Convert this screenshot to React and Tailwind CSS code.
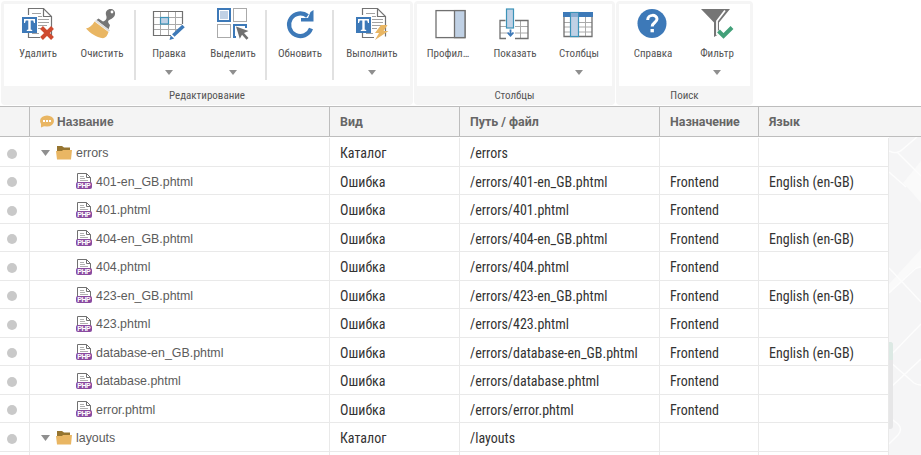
const cond = "font-['Roboto_Condensed','Roboto',sans-serif] [font-stretch:75%]";

function TextPage() {
  return (
    <>
      <path d="M7.500 8V1.500h15l8 8V29.500M7.500 25V30.500H19" fill="none" stroke="#737373" strokeWidth="1.2" />
      <path d="M22.500 1.500V9.500H30.500" fill="none" stroke="#737373" strokeWidth="1.2" />
      <path d="M11 6.500h9M17 9.500h4M17 12.500h11M17 15.500h11M17 18.500h9M17 21.500h5M11 26.500h7" stroke="#a3a3a3" strokeWidth="1" />
      <rect x="1" y="10" width="15" height="16" fill="#3d79b8" />
      <path d="M3 12h11v4h-1l-.8-2.500H9.700V22.500l1.500.4V24H5.800V22.900L7.300 22.500v-9H4.800L4 16H3z" fill="#fff" />
    </>
  );
}

const icons = {
  remove: (
    <>
      <TextPage />
      <path d="M20.500 20.500l11 11M31.500 20.500L20.500 31.500" stroke="#cf4a2f" strokeWidth="4" />
    </>
  ),
  clean: (
    <>
      <path d="M18 14.500c4-1.500 4-4 3-6.500-1-4 2-6.500 5.500-6 3 .5 4.500 4 3 7-1.500 2.500-4 3-6 4.500-1 1 0 3 1.500 4.500l-1.500 4.500-12-9.500 2-1.500z" fill="#757575" />
      <circle cx="27" cy="5" r="1.400" fill="#fff" />
      <path d="M10.500 13.500L24.500 24" stroke="#ddd" strokeWidth="2" />
      <path d="M9.500 14.500L23.500 25c-1 3.500-2.500 5.500-5.500 6.300C11 30 5.500 26.500 1 21.500c3-.5 6.500-3 8.500-7z" fill="#e9b663" />
    </>
  ),
  edit: (
    <>
      <path d="M8.500 5v23M16.500 5v23M23.500 5v21M1 10.500h29M1 17.500h29M1 22.500h27" stroke="#aaa" />
      <path d="M19 28.500H1.500V4.500H30.500V17" fill="none" stroke="#707070" strokeWidth="1.200" />
      <rect x="8.500" y="10.500" width="8" height="6.500" fill="#c0d1e5" stroke="#3c93b8" strokeWidth="1.200" />
      <path d="M21.300 28.500L31.500 19" stroke="#3d79b8" strokeWidth="3.600" />
      <path d="M17.500 33l1.200-4.500 3.500 3z" fill="#3d79b8" />
    </>
  ),
  select: (
    <>
      <rect x="2" y="2" width="12" height="12" fill="#fff" stroke="#3d79b8" strokeWidth="2" />
      <rect x="4" y="4" width="8" height="8" fill="#c0d1e5" />
      <rect x="17.500" y="1.500" width="13" height="13" fill="none" stroke="#aaa" />
      <rect x="1.500" y="17.500" width="13" height="13" fill="none" stroke="#aaa" />
      <path d="M20 30h-2V18h12v3" fill="none" stroke="#3d79b8" strokeWidth="2" />
      <path d="M20 19.500L32.500 24l-4.500 2 4.500 5-2 1.800-4.500-5-2.200 4z" fill="#707070" />
    </>
  ),
  refresh: (
    <>
      <path d="M28 21.500A11.300 11.300 0 1 1 24.500 9" fill="none" stroke="#3d79b8" strokeWidth="4.200" />
      <path d="M30.500 3v11.500H18V11H25L27.500 5z" fill="#3d79b8" />
    </>
  ),
  run: (
    <>
      <TextPage />
      <path d="M26 18h6.500l-4 6h5L20 33l4-7h-4z" fill="#e9b663" />
    </>
  ),
  profile: (
    <>
      <rect x="2" y="3.600" width="29" height="27" fill="#fff" stroke="#707070" strokeWidth="1.300" />
      <rect x="20.500" y="3.600" width="10.500" height="27" fill="#c0d1e5" stroke="#707070" strokeWidth="1.300" />
    </>
  ),
  show: (
    <>
      <path d="M2 19.500h7M2 26h7M17 19.500h13M17 26h13M22.500 13v18" stroke="#aaa" />
      <path d="M7.500 13.500H2V31.500H8M17 31.500H30V13.500H17" fill="none" stroke="#707070" strokeWidth="1.300" />
      <rect x="8.500" y="2" width="7" height="19" fill="#c0d1e5" stroke="#3c93b8" strokeWidth="1.200" />
      <path d="M12.500 22.500v6M9.500 25.500l3 3.200 3-3.200" fill="none" stroke="#3d79b8" strokeWidth="1.800" />
    </>
  ),
  columns: (
    <>
      <path d="M2 15.500h28M2 20h28M2 25h28M23.500 10v19" stroke="#aaa" />
      <path d="M2 10V29.500H30V10" fill="none" stroke="#707070" strokeWidth="1.300" />
      <rect x="1" y="5" width="30" height="5" fill="#3d79b8" />
      <rect x="8.500" y="5.500" width="8" height="24" fill="#c0d1e5" stroke="#3c93b8" strokeWidth="1.200" />
      <rect x="9" y="6" width="7" height="4" fill="#86abd2" />
    </>
  ),
  help: (
    <>
      <circle cx="16" cy="16.500" r="14.500" fill="#3d79b8" />
      <path d="M11.700 13c0-6 9.300-6 9.300-1 0 3.500-4.800 3.500-4.800 7.500" fill="none" stroke="#fff" strokeWidth="3" />
      <rect x="14.500" y="22" width="3.400" height="3.300" fill="#fff" />
    </>
  ),
  filter: (
    <>
      <path d="M1 2h29L19 15.500V27l-5 3V15.500z" fill="#757575" />
      <path d="M25 3.500L17 14V28" fill="none" stroke="#fff" strokeWidth="1.800" />
      <path d="M18.500 23.500l5.500 5 8-8" fill="none" stroke="#fff" strokeWidth="7" />
      <path d="M18.500 24l5 5 8.500-8.500" fill="none" stroke="#42a079" strokeWidth="4" />
    </>
  ),
};

function Tool({ icon, label, menu, wide, labelClass = "" }) {
  return (
    <div className={`flex h-full shrink-0 flex-col items-center ${wide ? "w-[74px]" : "w-16"}`}>
      <svg className="mt-[3px] h-[34px] w-[34px] shrink-0" viewBox="0 0 34 34">{icons[icon]}</svg>
      <span className={`mt-[5px] text-[11px] leading-4 whitespace-nowrap text-[#555] ${cond} ${labelClass}`}>{label}</span>
      {menu && <svg className="mt-2 h-[5px] w-2" viewBox="0 0 8 5"><path d="M0 0h8L4 5z" fill="#8f8f8f" /></svg>}
    </div>
  );
}

function Separator() {
  return <div className="mt-1.5 mr-px h-[70px] w-0.5 shrink-0 bg-[#e1e1e1]" />;
}

function Group({ title, className, children }) {
  return (
    <section className={`flex h-[104px] shrink-0 flex-col rounded bg-[#f5f5f5] px-[3px] pt-[3px] ${className}`}>
      <div className="flex h-[82px] bg-white pl-0.5">{children}</div>
      <h2 className={`flex h-[19px] items-center justify-center pt-0.5 text-[11px] text-[#555] ${cond}`}>{title}</h2>
    </section>
  );
}

const rows = [
  ["errors", "Каталог", "/errors", "", ""],
  ["401-en_GB.phtml", "Ошибка", "/errors/401-en_GB.phtml", "Frontend", "English (en-GB)"],
  ["401.phtml", "Ошибка", "/errors/401.phtml", "Frontend", ""],
  ["404-en_GB.phtml", "Ошибка", "/errors/404-en_GB.phtml", "Frontend", "English (en-GB)"],
  ["404.phtml", "Ошибка", "/errors/404.phtml", "Frontend", ""],
  ["423-en_GB.phtml", "Ошибка", "/errors/423-en_GB.phtml", "Frontend", "English (en-GB)"],
  ["423.phtml", "Ошибка", "/errors/423.phtml", "Frontend", ""],
  ["database-en_GB.phtml", "Ошибка", "/errors/database-en_GB.phtml", "Frontend", "English (en-GB)"],
  ["database.phtml", "Ошибка", "/errors/database.phtml", "Frontend", ""],
  ["error.phtml", "Ошибка", "/errors/error.phtml", "Frontend", ""],
  ["layouts", "Каталог", "/layouts", "", ""],
];

function FolderIcon() {
  return (
    <svg className="ml-[6px] h-4 w-4 shrink-0" viewBox="0 0 16 16">
      <path d="M1 1h5l2 1.500h6V6H1z" fill="#967530" />
      <path d="M0 6h6l1-1h9l-1 9.500H1z" fill="#e9b663" />
    </svg>
  );
}

function PhpIcon() {
  return (
    <svg className="h-4 w-4 shrink-0" viewBox="0 0 16 16">
      <path d="M1.500 10V.500h9l4 4V10" fill="#fff" stroke="#707070" />
      <path d="M10.500.500v4h4" fill="none" stroke="#707070" />
      <path d="M4 3.500h4M4 5.500h5M4 7.500h8" stroke="#b0b0b0" />
      <rect y="9" width="16" height="7" rx="2" fill="#8a4ba0" />
      <text x="8" y="15.100" textAnchor="middle" textLength="13.500" fontSize="7" fontWeight="bold" fill="#fff" fontFamily="Liberation Sans, sans-serif">PHP</text>
    </svg>
  );
}

function Row({ data, index }) {
  const [name, kind, path, target, lang] = data;
  const folder = kind === "Каталог";
  const short = index % 2 === 1;
  const height = index === 0 ? "h-[30px] pt-px" : short ? "h-7" : "h-[29px]";
  const cell = `flex items-center border-r border-[#e9e9e9] pl-[10px] whitespace-nowrap text-[14px] text-[#333] ${short ? "pt-[3px]" : "pt-0.5"} ${cond}`;
  return (
    <div className={`grid shrink-0 grid-cols-[30px_300px_130px_200px_99px_130px] border-b border-[#e9e9e9] bg-white ${height}`}>
      <div className="flex items-center border-r border-[#e9e9e9] pt-[3px] pl-[7px]">
        <span className="size-[10px] rounded-full bg-[#c9c9c9]" />
      </div>
      <div className={`flex items-center border-r border-[#e9e9e9] font-['Liberation_Sans',sans-serif] text-[12.4px] text-[#5c5c5c] ${short ? "pt-px" : "pt-0.5"} ${folder ? "pl-[11px]" : "pl-[46px]"}`}>
        {folder && <svg className="h-1.5 w-[9px]" viewBox="0 0 9 6"><path d="M0 0h9L4.500 6z" fill="#8f8f8f" /></svg>}
        {folder ? <FolderIcon /> : <PhpIcon />}
        <span className={`ml-1 ${short ? "pt-0.5" : "pt-px"}`}>{name}</span>
      </div>
      <div className={cell}>{kind}</div>
      <div className={cell}>{path}</div>
      <div className={cell}>{target}</div>
      <div className={cell}>{lang}</div>
    </div>
  );
}

export default function App() {
  const head = "flex items-center border-r border-[#bdbdbd] pl-[10px]";
  return (
    <div className="flex h-[455px] w-[921px] flex-col overflow-hidden bg-white">
      <div className="flex h-[106px] shrink-0 pt-px pl-px">
        <Group title="Редактирование" className="w-[412px]">
          <Tool icon="remove" label="Удалить" />
          <Tool icon="clean" label="Очистить" />
          <Separator />
          <Tool icon="edit" label="Правка" menu />
          <Tool icon="select" label="Выделить" menu />
          <Separator />
          <Tool icon="refresh" label="Обновить" />
          <Separator />
          <Tool icon="run" label="Выполнить" menu wide />
        </Group>
        <Group title="Столбцы" className="ml-px w-[201px]">
          <Tool icon="profile" label="Профил…" labelClass="mr-1.5" />
          <Tool icon="show" label="Показать" />
          <Tool icon="columns" label="Столбцы" menu />
        </Group>
        <Group title="Поиск" className="ml-px w-[137px]">
          <Tool icon="help" label="Справка" />
          <Tool icon="filter" label="Фильтр" menu />
        </Group>
      </div>
      <div className="grid h-[31px] shrink-0 grid-cols-[30px_300px_130px_200px_99px_162px] border-y border-[#bdbdbd] bg-[#f4f4f4] font-['Roboto',sans-serif] text-[12.4px] font-bold text-[#666]">
        <div className="border-r border-[#bdbdbd]" />
        <div className={head}>
          <svg className="mr-[3px] h-[13px] w-[14px]" viewBox="0 0 14 13">
            <ellipse cx="7" cy="6" rx="7" ry="5.500" fill="#e9b663" />
            <path d="M1 8l0 4.500L7 10z" fill="#e9b663" />
            <path d="M3 5h2v2H3zM6 5h2v2H6zM9 5h2v2H9z" fill="#fff" />
          </svg>
          <span className="font-['Liberation_Sans',sans-serif] text-xs">Название</span>
        </div>
        <div className={`${head} pt-0.5`}>Вид</div>
        <div className={`${head} pt-0.5`}>Путь / файл</div>
        <div className={`${head} pt-0.5`}>Назначение</div>
        <div className="flex items-center pt-0.5 pl-[10px]">Язык</div>
      </div>
      <div className="flex h-[318px] shrink-0">
        <div className="flex w-[889px] flex-col overflow-hidden bg-white">
          {rows.map((row, i) => <Row key={row[0]} data={row} index={i} />)}
          <div className="grid h-1 grid-cols-[30px_300px_130px_200px_99px_130px]">
            {rows.slice(0, 6).map((row) => <div key={row[0]} className="border-r border-[#e9e9e9]" />)}
          </div>
        </div>
        <svg className="h-[318px] w-8 shrink-0" viewBox="0 0 32 318">
          <rect width="32" height="318" fill="#f5f5f6" />
          <path d="M0 60L14 46 32 24V66Q20 52 14 46L0 60M16 44L32 26V62z" fill="#fafafa" />
          <path d="M0 147L32 112V131H26L0 156z" fill="#fafafa" />
          <path d="M0 14q8 4 14-2L28 0M8 15l24 24M0 35l17 15M0 131l32 34M0 220l32-33M0 252l32-30M0 224l25 22q3 2 7 2M0 280l9 7q5 5 0 11l-9 9M0 156l26-24q3-2 6-2" fill="none" stroke="#fdfdfd" strokeWidth="1.400" />
          <path d="M0 205h1a3 3 0 0 1 3 3v81a3 3 0 0 1-3 3H0z" fill="#e6e6e7" />
          <path d="M0 205h1a3 3 0 0 1 3 3v15H0z" fill="#dce9e4" />
        </svg>
      </div>
    </div>
  );
}
